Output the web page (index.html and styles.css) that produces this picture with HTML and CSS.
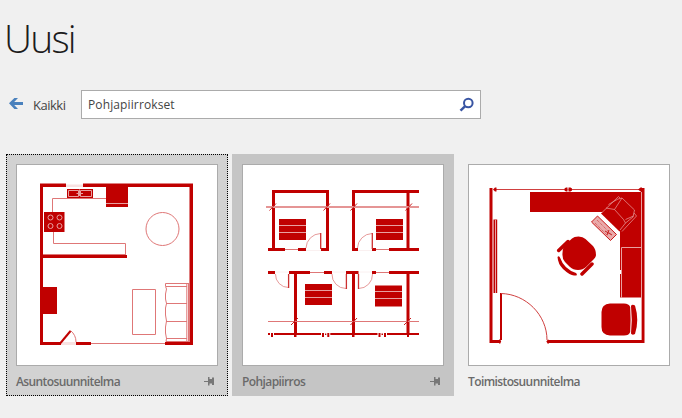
FILE: index.html
```html
<!DOCTYPE html>
<html lang="fi">
<head>
<meta charset="utf-8">
<title>Uusi</title>
<link rel="stylesheet" href="styles.css">
</head>
<body>
<h1 class="title">Uusi</h1>
<div class="toolbar">
  <a class="back">
    <svg class="arrow" width="16" height="14" viewBox="0 0 16 14"><path d="M1 6.300 6.400 1H10L6.200 4.900H15V8H6.200L10 12H6.400Z"/></svg>
    <span class="back-label">Kaikki</span>
  </a>
  <div class="search">
    <span class="query">Pohjapiirrokset</span>
    <svg class="lens" width="16" height="16" viewBox="0 0 16 16"><circle cx="9.300" cy="6" r="4.300"/><path d="M6.200 9.200 1.500 13.600"/></svg>
  </div>
</div>
<div class="cards">
  <article class="card hovered focused">
    <svg class="thumb" viewBox="17 165 200 200">
      <path class="light" d="M66 184.500H83V187H66ZM60 342H76V345H60Z"/>
      <path class="fill" d="M40 183.500H66V187H43V342H61V345H40ZM83 183.500H193V345H165V342H189.500V187H83ZM76 342H91V345H76ZM106 186H128V207H106ZM67 189H93V198H67ZM44 212H64.500V232H44ZM42 255H127V258H42ZM42 287H57V314H42Z"/>
      <path class="thin" d="M106 198.500H52.500V212M53.500 232V243.500H125.500V255M43 254.500H125M91 343.500H165M132.500 289.500H155.500V334.500H132.500ZM189 283.500H165.500V286.500L166.500 289 165.500 294V299L166.500 303.500 165.500 308V315L166.500 321 165.500 327V333L166.500 338.500 166 341.500H189M166 286.500H187M166 303.500H187M166 321.500H187M166 338.500H187M186.800 284V341M188.500 284V341M70.500 330.500Q76 335 76 342"/>
      <circle class="thin" cx="162.500" cy="229" r="16.500"/>
      <path class="leaf" d="M60.500 343 70.500 331"/>
      <g class="detail"><path d="M106 203.500H128M68.500 190.500H78.500V196.500H68.500ZM80.500 190.500H91.500V196.500H80.500ZM79.500 189.500V196M76.500 193.500H83"/><circle cx="50.500" cy="217.500" r="2.500"/><circle cx="59.500" cy="217.500" r="2.500"/><circle cx="50.500" cy="226" r="2.500"/><circle cx="59.500" cy="226" r="2.500"/></g>
    </svg>
    <div class="caption"><span class="name">Asuntosuunnitelma</span>
      <svg class="pin" width="11" height="9" viewBox="0 0 11 9"><path d="M0 4H4V0H5.500V2H8V.500H10V8H8V6.500H5.500V8.500H4V5H0Z"/></svg></div>
  </article>
  <article class="card selected">
    <svg class="thumb" viewBox="243 165 200 200">
      <path class="faint" d="M306 250.500H321M358 250.500H372M275 272H289M332 272H346M359 272H372"/>
      <path class="fill" d="M272 190H329V251H321V248H326V193H275V248H285V251H268V248H272ZM298 248H306V251H298ZM352 190H419V193H409.500V248H419V251H389V248H406.500V193H355V248H358V251H352ZM372 248H376V251H372Z"/>
      <path class="fill" d="M268 271H275V274H268ZM289 271H310V274H297V333H294V274H289ZM324 271H332V274H324ZM346 271H358.500V274H355V333H352V274H346ZM372 271H376V274H372ZM389 271H419V274H409.500V333H406.500V274H389Z"/>
      <path class="fill" d="M279 219H306V240H279ZM376 219H403V240H376ZM305 284H332V305H305ZM375 285.500H402V306.500H375Z"/>
      <path class="fill" d="M268 333H270V335H268ZM271 333H273V337H271ZM274 333H321V335H274ZM322 333H324V337H322ZM325 333.500H326.300V335H325ZM327.300 333H329.300V337H327.300ZM330.300 333H377.500V335H330.300ZM378.500 333H380.500V337H378.500ZM381.500 333.500H383V335H381.500ZM384 333H386V337H384ZM387 333H419V335H387ZM294 335H296.500V337H294ZM352 335H354.500V337H352ZM407 335H409V337H407Z"/>
      <path class="soft" d="M266 207H419"/>
      <path class="thin" d="M268 321.500H419M285 249.500H298M376 249.500H389M310 272.500H324M376 272.500H389"/>
      <path class="fine" d="M320.500 233.500A15 15 0 0 0 306 248M372 233.500A15 15 0 0 0 357.500 248M275.500 274A13 13 0 0 0 288.500 287.500M332 274A14 14 0 0 0 346 288.500M372.500 274A14 14 0 0 1 358.500 288.500"/>
      <path class="door" d="M320.700 233V249M372.300 233V249M288.600 274V288M346.400 274V289M358.500 274V289"/>
      <path class="tick" d="M269.500 210.500 276 203.500M323.500 210.500 330 203.500M350.500 210.500 357 203.500M405.500 210.500 412 203.500M291 325 298 318M350.500 325 357 318M404 325 411 318"/>
      <path class="detail" d="M279 225.500H306M279 232.500H306M376 225.500H403M376 232.500H403M305 290.500H332M305 297.500H332M375 291.500H402M375 298.500H402"/>
    </svg>
    <div class="caption"><span class="name">Pohjapiirros</span>
      <svg class="pin" width="11" height="9" viewBox="0 0 11 9"><path d="M0 4H4V0H5.500V2H8V.500H10V8H8V6.500H5.500V8.500H4V5H0Z"/></svg></div>
  </article>
  <article class="card">
    <svg class="thumb" viewBox="469 165 200 200">
      <path class="fill" d="M489.500 188H492.500V340H499L500 339 501.200 341.500 500 344 499 343H489.500ZM641 188H644.500V343H549L548 344 546.300 341.500 548 339.500 549 340H641ZM530 192H641V297.500H620V231L604 212H530Z"/>
      <path class="thin strong" d="M495 189.500H640"/>
      <path class="white" d="M567.500 187H568.500V192H567.500Z"/>
      <path class="fill" d="M493 189.500 495 187.500H496.500V191.500H495ZM564.500 188.500 566 187.500H567.500V191.500H566L564.500 190.500ZM572 188.500 570.500 187.500H568.500V191.500H570.500L572 190.500ZM638 189.500 640.500 187.500H642V191.500H640.500Z"/>
      <path class="fill" d="M493.500 219.500H497.200V293H493.500Z"/>
      <path class="detail" d="M495.500 220V293M641.500 192V340M621.500 298V247.500H641"/>
      <path class="white" d="M620 270H621V274H620Z"/>
      <path class="leaf" d="M501 293V340"/>
      <path class="thin strong" d="M501 293.500C526 294 547 315 547 340"/>
      <path class="fill" d="M610 303.500H624Q629 303.500 630.200 307Q631 320 630.200 332Q629 335.500 624 335.500H610Q601.500 335 601.500 327V312Q601.500 304 610 303.500ZM631 306Q632 304 635 305.500Q639.500 320 635 334Q632 335.500 631 333.500Q632.500 320 631 306Z"/>
      <path class="fill" d="M572 238.500Q574 236.500 578.500 236.500Q583 236.500 585.500 239L593 246Q596 249.500 596 255Q596 257.500 592 261L586 267Q583 270 578 270Q573 270 570 267L565 262Q562 259 562.500 253Q562.500 248 565 245Z"/>
      <path class="arm" d="M558.700 250.500 568 241.500M582 274 592 264"/>
      <path class="fill" d="M557.500 257Q559 255 560.200 258Q564 269 576 273Q578.500 276 574 275.500Q570 275.500 563 269Q558 264 557.500 257Z"/>
      <path class="gap" d="M600.500 214.500 619 232.500"/>
      <path class="fill" d="M601 213.500 618 196.500 626 198 635 212 636 216 619.500 231.500Z"/>
      <path class="detail fine-light" d="M602 212.500 618.500 196.500 620 198M606 208 614.500 209.500 623.500 219.500 625.500 223 620 230M608.500 204.500 618 199 622 198 634.500 210 633 217 625.500 223M614.500 209.500 622 198M625.500 219.500 633.500 216M622 231.500 636.500 216 634 213"/>
      <path class="keys" d="M591.500 222 597.500 216 616.500 234.500 610.500 240.500Z"/>
      <path class="dots" d="M597 220 611 234M595 223 608 236"/>
      <path class="tick" d="M605 231 612 235M607 235 609 230"/>
    </svg>
    <div class="caption"><span class="name">Toimistosuunnitelma</span></div>
  </article>
</div>
</body>
</html>
```
FILE: styles.css
```css
* { box-sizing: border-box; }
body {
  margin: 0;
  width: 682px;
  height: 418px;
  overflow: hidden;
  background: #f0f0f0;
  color: #444;
  font-family: "Open Sans", "Noto Sans", sans-serif;
}
.title {
  margin: 0;
  padding: 11px 0 0 4px;
  height: 90px;
  font-size: 39px;
  line-height: 54px;
  font-weight: 300;
  letter-spacing: -1.8px;
  color: #1c1c1c;
}
.toolbar { display: flex; height: 29px; }
.back { display: flex; width: 81px; padding-left: 8px; }
.arrow { margin-top: 7px; fill: #4a81bd; }
.back-label { margin-left: 9px; font-size: 13px; line-height: 30px; letter-spacing: -.5px; }
.search {
  display: flex;
  justify-content: space-between;
  width: 400px;
  padding: 0 5px 0 6px;
  border: 1px solid #ababab;
  background: #fff;
}
.query { font-size: 12px; line-height: 27px; letter-spacing: .12px; }
.lens { margin-top: 6px; fill: none; stroke: #3955a3; stroke-width: 2; }
.lens path { stroke-width: 2.5; }
.cards { display: flex; gap: 4px; padding: 35px 0 0 6px; }
.card { width: 222px; height: 242px; flex: none; padding: 10px; }
.hovered { background: #d2d2d2; }
.focused { padding: 9px; border: 1px dotted #000; }
.selected { background: #c5c5c5; }
.thumb { display: block; width: 202px; height: 202px; border: 1px solid #ababab; background: #fff; }
.caption { display: flex; justify-content: space-between; height: 30px; padding-right: 3px; }
.name { font-size: 12px; line-height: 31px; font-weight: 600; color: #6a6a6a; letter-spacing: -.6px; }
.pin { margin-top: 11px; fill: #777; }

.thumb path, .thumb circle { fill: none; }
.thumb .fill { fill: #c00000; }
.thumb .white { fill: #fff; }
.thumb .light { fill: #f8e2e2; }
.thin { stroke: #df7777; stroke-width: 1; }
.strong { stroke: #d04040; }
.soft { stroke: #e59595; stroke-width: 2; }
.fine { stroke: #e08080; stroke-width: .8; }
.faint { stroke: #faf0f0; }
.door { stroke: #cc3030; stroke-width: 1.3; }
.leaf { stroke: #c00000; stroke-width: 2; }
.tick { stroke: #c72020; stroke-width: 1; }
.arm { stroke: #c00000; stroke-width: 3.5; stroke-linecap: round; }
.gap { stroke: #fff; stroke-width: 3; }
.detail { stroke: #e8a0a0; stroke-width: 1; fill: none; }
.fine-light { stroke-width: .7; }
.thumb .keys { fill: #e9aaaa; stroke: #c81818; stroke-width: 1; }
.dots { stroke: #d45050; stroke-dasharray: 1 1; }
```
